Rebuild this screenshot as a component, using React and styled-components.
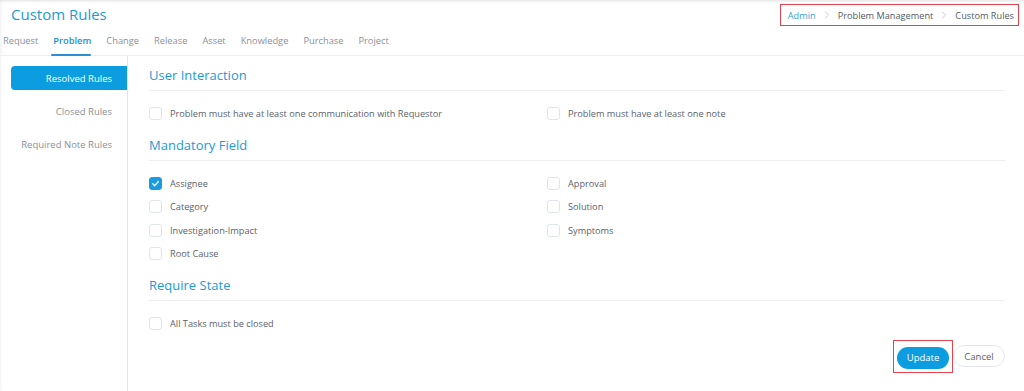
import styled, { createGlobalStyle } from "styled-components";

const GlobalStyle = createGlobalStyle`
    * { box-sizing: border-box; }
    body {
        margin: 0;
        background: #ffffff;
        font-family: 'Open Sans', 'Liberation Sans', sans-serif;
    }
`;

const tabs = ["Request", "Problem", "Change", "Release", "Asset", "Knowledge", "Purchase", "Project"];
const sideItems = ["Resolved Rules", "Closed Rules", "Required Note Rules"];

const sections = [
    {
        title: "User Interaction",
        items: [
            { label: "Problem must have at least one communication with Requestor" },
            { label: "Problem must have at least one note" },
        ],
    },
    {
        title: "Mandatory Field",
        items: [
            { label: "Assignee", checked: true },
            { label: "Approval" },
            { label: "Category" },
            { label: "Solution" },
            { label: "Investigation-Impact" },
            { label: "Symptoms" },
            { label: "Root Cause" },
        ],
    },
    {
        title: "Require State",
        items: [{ label: "All Tasks must be closed" }],
    },
];

function CheckMark() {
    return (
        <svg width="9" height="9" viewBox="0 0 10 10" fill="none">
            <path d="M2 5.3 L4.2 7.4 L8.2 2.8" stroke="#ffffff" strokeWidth="1.5" strokeLinecap="round" strokeLinejoin="round" />
        </svg>
    );
}

function Chevron() {
    return (
        <svg width="6" height="8" viewBox="0 0 6 8" fill="none">
            <path d="M1.5 1 L4.5 4 L1.5 7" stroke="#c3c9d1" strokeWidth="1" strokeLinecap="round" strokeLinejoin="round" />
        </svg>
    );
}

export default function App() {
    return (
        <>
            <GlobalStyle />
            <Page>
                <Header>
                    <Title>Custom Rules</Title>
                    <Breadcrumb>
                        <Crumb link>Admin</Crumb>
                        <Chevron />
                        <Crumb>Problem Management</Crumb>
                        <Chevron />
                        <Crumb>Custom Rules</Crumb>
                    </Breadcrumb>
                </Header>
                <Tabs>
                    {tabs.map((tab) => (
                        <Tab key={tab} active={tab === "Problem"}>{tab}</Tab>
                    ))}
                </Tabs>
                <Body>
                    <Sidebar>
                        {sideItems.map((item, index) => (
                            <SideItem key={item} active={index === 0}>{item}</SideItem>
                        ))}
                    </Sidebar>
                    <Main>
                        {sections.map((section) => (
                            <Section key={section.title}>
                                <SectionTitle>{section.title}</SectionTitle>
                                <Options>
                                    {section.items.map((item) => (
                                        <Option key={item.label}>
                                            <Box checked={item.checked}>{item.checked && <CheckMark />}</Box>
                                            <span>{item.label}</span>
                                        </Option>
                                    ))}
                                </Options>
                            </Section>
                        ))}
                        <Actions>
                            <Highlight>
                                <PrimaryButton>Update</PrimaryButton>
                            </Highlight>
                            <GhostButton>Cancel</GhostButton>
                        </Actions>
                    </Main>
                </Body>
            </Page>
        </>
    );
}

const Page = styled.div`
    min-height: 391px;
    display: flex;
    flex-direction: column;
    background: #ffffff;
    box-shadow: inset 0 3px 3px -2px rgba(0, 0, 0, 0.12), inset 3px 0 3px -2px rgba(0, 0, 0, 0.06);
`;

const Header = styled.div`
    display: flex;
    justify-content: space-between;
    align-items: flex-start;
    padding: 4px 5px 0 11px;
    height: 31px;
`;

const Title = styled.h1`
    margin: 0;
    font-size: 15px;
    font-weight: 500;
    line-height: 20px;
    color: #1b9ad8;
`;

const Breadcrumb = styled.div`
    display: flex;
    align-items: center;
    gap: 8px;
    height: 22px;
    padding: 0 4px 0 7px;
    border: 1.5px solid #e5424d;
    font-size: 9.2px;
    font-weight: 500;
`;

const Crumb = styled.span`
    color: ${(p) => (p.link ? "#3a9fd8" : "#555a63")};
`;

const Tabs = styled.div`
    display: flex;
    gap: 15px;
    padding-left: 3px;
    height: 25px;
    border-bottom: 1px solid #eceef1;
`;

const Tab = styled.div`
    position: relative;
    padding-top: 3px;
    font-size: 9.3px;
    color: ${(p) => (p.active ? "#1b8fd0" : "#8c9099")};
    font-weight: ${(p) => (p.active ? 600 : 400)};

    &::after {
        content: "";
        display: ${(p) => (p.active ? "block" : "none")};
        position: absolute;
        left: -2px;
        right: 0;
        bottom: -1px;
        height: 2px;
        border-radius: 1px;
        background: #2a8fd6;
    }
`;

const Body = styled.div`
    flex: 1;
    display: flex;
`;

const Sidebar = styled.div`
    width: 128px;
    flex-shrink: 0;
    display: flex;
    flex-direction: column;
    gap: 9px;
    padding: 10px 0 0 11px;
    border-right: 1.5px solid #dde4ee;
`;

const SideItem = styled.div`
    height: 24px;
    display: flex;
    align-items: center;
    justify-content: flex-end;
    padding-right: 15px;
    border-radius: 4px 0 0 4px;
    font-size: 9.5px;
    background: ${(p) => (p.active ? "#0c9de0" : "transparent")};
    color: ${(p) => (p.active ? "#ffffff" : "#8c9099")};
    font-weight: ${(p) => (p.active ? 500 : 400)};
`;

const Main = styled.div`
    flex: 1;
    padding: 9px 19px 0 21px;
`;

const Section = styled.div`
    display: flex;
    flex-direction: column;
`;

const SectionTitle = styled.h2`
    margin: 0;
    height: 26px;
    line-height: 20px;
    font-size: 13px;
    font-weight: 500;
    color: #1b9ad8;
    border-bottom: 1px solid #eceef2;
`;

const Options = styled.div`
    display: grid;
    grid-template-columns: 398px 1fr;
    padding: 11px 0 9px;
`;

const Option = styled.label`
    display: flex;
    align-items: center;
    gap: 8px;
    height: 23.5px;
    font-size: 9.2px;
    color: #5c616b;
`;

const Box = styled.span`
    width: 13px;
    height: 13px;
    display: flex;
    align-items: center;
    justify-content: center;
    border-radius: 3px;
    border: 1px solid ${(p) => (p.checked ? "#1a9be0" : "#dfe4ea")};
    background: ${(p) => (p.checked ? "#1a9be0" : "#ffffff")};
`;

const Actions = styled.div`
    display: flex;
    justify-content: flex-end;
    align-items: center;
    margin-top: -4px;
`;

const Highlight = styled.div`
    padding: 3px;
    border: 1.5px solid #e5424d;
`;

const PrimaryButton = styled.button`
    height: 22px;
    width: 52px;
    border: none;
    border-radius: 11px;
    background: #0c9de0;
    color: #ffffff;
    font-family: inherit;
    font-size: 9.5px;
    font-weight: 500;
`;

const GhostButton = styled.button`
    height: 22px;
    width: 52px;
    border: 1px solid #e3e7ec;
    border-radius: 11px;
    background: #ffffff;
    color: #5c616b;
    font-family: inherit;
    font-size: 9.5px;
`;
